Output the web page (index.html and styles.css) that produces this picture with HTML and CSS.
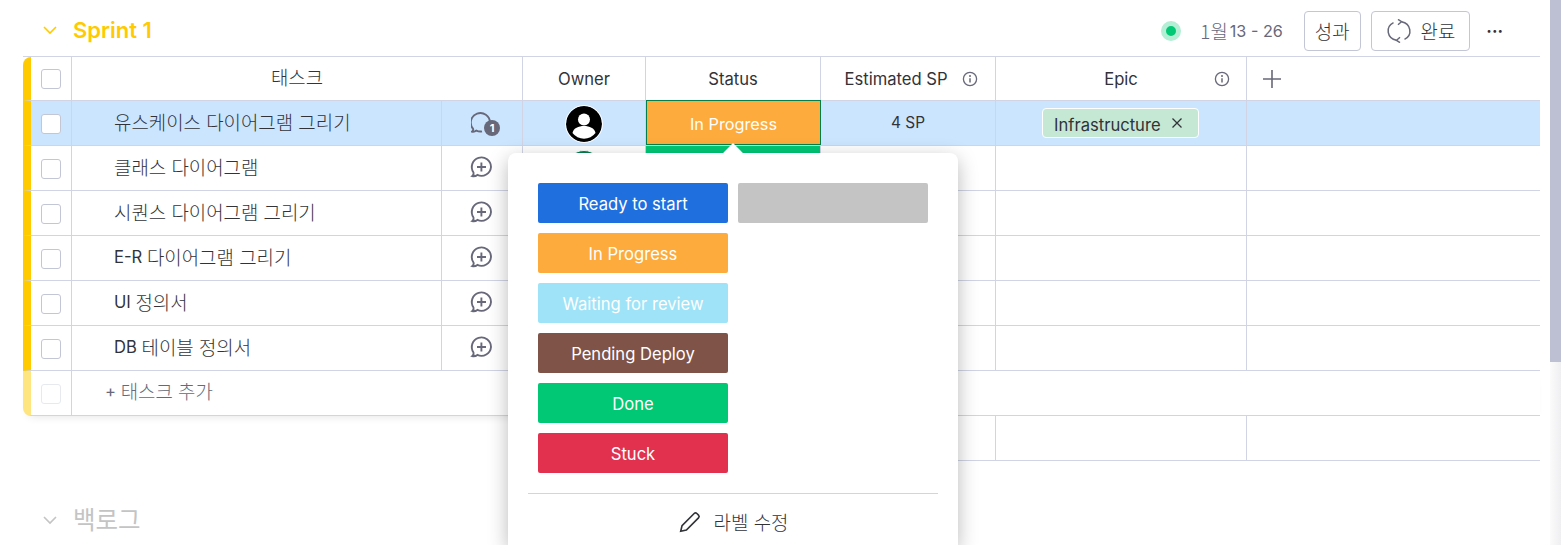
FILE: index.html
```html
<!DOCTYPE html>
<html lang="ko">
<head>
  <meta charset="UTF-8" />
  <title>Sprint board</title>
  <link rel="stylesheet" href="styles.css">
</head>
<body>
<div class="page">
  <div class="board">

    <!-- 스프린트 그룹 -->
    <div class="group-head">
      <svg class="chevron" viewBox="0 0 16 10" width="16" height="10"><path d="M2 2l6 6 6-6" fill="none" stroke="currentColor" stroke-width="1.6"/></svg>
      <span class="group-title">Sprint 1</span>
      <div class="group-tools">
        <span class="dot"></span>
        <span class="dates"><span class="ko">1월</span><span class="date-range">13 - 26</span></span>
        <button class="tool-btn"><span class="ko">성과</span></button>
        <button class="tool-btn wide">
          <svg viewBox="0 0 26 24" width="26" height="24" fill="none" stroke="#676879" stroke-width="1.5"><path d="M15.500 2.700A10.500 9.500 0 0 1 18.500 20.300M10.500 21.300A10.500 9.500 0 0 1 7.500 3.700"/><path d="M12 .4L15.500 2.700 12 5.800M14 18.200L10.500 21.300 14 23.600"/></svg>
          <span class="ko">완료</span>
        </button>
        <span class="more">···</span>
      </div>
    </div>

    <div class="table">
      <div class="row head">
        <div class="cell check"><span class="box"></span></div>
        <div class="cell task-head"><span class="ko">태스크</span></div>
        <div class="cell">Owner</div>
        <div class="cell">Status</div>
        <div class="cell sp-head">Estimated SP <svg class="info" viewBox="0 0 16 16" width="16" height="16"><circle cx="8" cy="8" r="6.600" fill="none" stroke="#676879" stroke-width="1.300"/><path d="M8 7.200v4.200" stroke="#676879" stroke-width="1.500"/><circle cx="8" cy="4.900" r="1" fill="#676879"/></svg></div>
        <div class="cell epic-head">Epic <svg class="info" viewBox="0 0 16 16" width="16" height="16"><circle cx="8" cy="8" r="6.600" fill="none" stroke="#676879" stroke-width="1.300"/><path d="M8 7.200v4.200" stroke="#676879" stroke-width="1.500"/><circle cx="8" cy="4.900" r="1" fill="#676879"/></svg></div>
        <div class="cell add-col"><svg viewBox="0 0 18 18" width="18" height="18"><path d="M9 0v18M0 9h18" stroke="#676879" stroke-width="1.600"/></svg></div>
      </div>

      <div class="row selected">
        <div class="cell check"><span class="box"></span></div>
        <div class="cell name"><span class="ko">유스케이스 다이어그램 그리기</span></div>
        <div class="cell">
          <svg class="talk talk-count" viewBox="0 0 32 28" width="32" height="28"><path d="M19 13.500a9.600 9.600 0 1 0-17 6.200c.5 1-.4 2.400-1.100 3 1.600.4 3.300-.1 4.500-1.100 1.700.8 3.900 1.200 5.600.7" fill="none" stroke="#676879" stroke-width="1.900"/><circle cx="21" cy="19" r="8" fill="#676879"/><text x="21" y="23" class="talk-num">1</text></svg>
        </div>
        <div class="cell"><span class="avatar"><svg viewBox="0 0 36 36" width="36" height="36"><circle cx="18" cy="18" r="18" fill="#000"/><circle cx="18" cy="13.500" r="6" fill="#fff"/><path d="M6.500 27c1-5 6-7 11.500-7s10.500 2 11.500 7a14.500 14.500 0 0 1-23 0z" fill="#fff"/></svg></span></div>
        <div class="cell status-cell">In Progress</div>
        <div class="cell sp">4 SP</div>
        <div class="cell epic-cell"><span class="tag">Infrastructure <svg viewBox="0 0 12 12" width="12" height="12"><path d="M1.500 1.500l9 9M10.500 1.500l-9 9" stroke="#323338" stroke-width="1.300"/></svg></span></div>
        <div class="cell add-col"></div>
      </div>

      <div class="row">
        <div class="cell check"><span class="box"></span></div>
        <div class="cell name"><span class="ko">클래스 다이어그램</span></div>
        <div class="cell"><svg class="talk" viewBox="0 0 24 24" width="24" height="24"><use href="#talk-plus"/></svg></div>
        <div class="cell"><span class="avatar green"></span></div>
        <div class="cell status-done"></div>
        <div class="cell"></div>
        <div class="cell"></div>
        <div class="cell add-col"></div>
      </div>
      <div class="row">
        <div class="cell check"><span class="box"></span></div>
        <div class="cell name"><span class="ko">시퀀스 다이어그램 그리기</span></div>
        <div class="cell"><svg class="talk" viewBox="0 0 24 24" width="24" height="24"><use href="#talk-plus"/></svg></div>
        <div class="cell"></div><div class="cell"></div><div class="cell"></div><div class="cell"></div>
        <div class="cell add-col"></div>
      </div>
      <div class="row">
        <div class="cell check"><span class="box"></span></div>
        <div class="cell name">E-R&nbsp;<span class="ko">다이어그램 그리기</span></div>
        <div class="cell"><svg class="talk" viewBox="0 0 24 24" width="24" height="24"><use href="#talk-plus"/></svg></div>
        <div class="cell"></div><div class="cell"></div><div class="cell"></div><div class="cell"></div>
        <div class="cell add-col"></div>
      </div>
      <div class="row">
        <div class="cell check"><span class="box"></span></div>
        <div class="cell name">UI&nbsp;<span class="ko">정의서</span></div>
        <div class="cell"><svg class="talk" viewBox="0 0 24 24" width="24" height="24"><use href="#talk-plus"/></svg></div>
        <div class="cell"></div><div class="cell"></div><div class="cell"></div><div class="cell"></div>
        <div class="cell add-col"></div>
      </div>
      <div class="row">
        <div class="cell check"><span class="box"></span></div>
        <div class="cell name">DB&nbsp;<span class="ko">테이블 정의서</span></div>
        <div class="cell"><svg class="talk" viewBox="0 0 24 24" width="24" height="24"><use href="#talk-plus"/></svg></div>
        <div class="cell"></div><div class="cell"></div><div class="cell"></div><div class="cell"></div>
        <div class="cell add-col"></div>
      </div>

      <div class="row add-row">
        <div class="cell check"><span class="box faded"></span></div>
        <div class="cell add-task">+&nbsp;<span class="ko">태스크 추가</span></div>
      </div>

      <div class="row summary">
        <div class="cell"></div><div class="cell"></div><div class="cell"></div><div class="cell"></div>
        <div class="cell add-col"></div>
      </div>
    </div>

    <!-- 백로그 그룹 -->
    <div class="group-head backlog">
      <svg class="chevron" viewBox="0 0 16 10" width="16" height="10"><path d="M2 2l6 6 6-6" fill="none" stroke="currentColor" stroke-width="1.600"/></svg>
      <span class="group-title ko-title">백로그</span>
    </div>

    <!-- 상태 선택 팝업 -->
    <div class="popup">
      <span class="popup-arrow"></span>
      <div class="labels">
        <span class="label blue">Ready to start</span>
        <span class="label gray"></span>
        <span class="label orange">In Progress</span>
        <span class="label sky">Waiting for review</span>
        <span class="label brown">Pending Deploy</span>
        <span class="label green">Done</span>
        <span class="label red">Stuck</span>
      </div>
      <div class="popup-foot">
        <svg viewBox="0 0 22 22" width="24" height="24" fill="none" stroke="#323338" stroke-width="1.500"><path d="M2.500 19.500l1.200-5.200L14.800 3.200a1.800 1.800 0 0 1 2.500 0l1.500 1.500a1.800 1.800 0 0 1 0 2.500L7.700 18.300z"/></svg>
        <span class="ko">라벨 수정</span>
      </div>
    </div>
  </div>
  <div class="scrollbar"><div class="scroll-thumb"></div></div>
</div>

<svg class="defs" width="0" height="0">
  <symbol id="talk-plus" viewBox="0 0 24 24">
    <path d="M22 12a9.600 9.600 0 1 0-17.500 5.500c.4 1-.4 2.800-1.300 3.600 1.800.4 3.800-.1 5.200-1.200A9.600 9.600 0 0 0 22 12z" fill="none" stroke="#676879" stroke-width="1.900"/>
    <path d="M12.400 7.500v9M8 12h9" stroke="#676879" stroke-width="1.900"/>
  </symbol>
</svg>
</body>
</html>
```

FILE: styles.css
```css
* {
  box-sizing: border-box;
}
html, body {
  margin: 0;
  height: 545px;
  overflow: hidden;
  background: white;
}
body {
  font-family: Inter, "Noto Sans CJK KR", sans-serif;
  font-size: 16.6px;
  color: #323338;
}
.ko {
  font-family: "Noto Sans CJK KR", sans-serif;
  font-size: 18.9px;
  font-weight: 300;
  line-height: 24px;
}
.page {
  display: flex;
  height: 545px;
}
.board {
  position: relative;
  flex: 1;
  padding-left: 23px;
  padding-right: 10px;
}
.scrollbar {
  width: 11px;
  background: linear-gradient(to right, #fbfbfb, #efeff1);
}
.scroll-thumb {
  height: 362px;
  background: #bcc0d2;
}
.defs {
  position: absolute;
}

/* group header */
.group-head {
  display: flex;
  align-items: center;
  height: 56px;
  padding: 4px 0 0 19px;
  color: #ffcb00;
}
.chevron {
  margin-right: 15px;
}
.group-title {
  font-size: 22px;
  font-weight: 600;
}
.group-tools {
  margin-left: auto;
  margin-top: 2px;
  display: flex;
  align-items: center;
  color: #323338;
  padding-right: 37px;
}
.dot {
  width: 20px;
  height: 20px;
  border-radius: 50%;
  background: #00c875;
  border: 5px solid #b3eed5;
  margin-right: 19px;
}
.dates {
  display: flex;
  align-items: center;
  gap: 2px;
  color: #676879;
  margin-right: 21px;
}
.date-range {
  font-size: 16.2px;
}
.tool-btn {
  display: flex;
  align-items: center;
  gap: 9px;
  height: 40px;
  padding: 0 10px;
  background: white;
  border: 1px solid #c3c6d4;
  border-radius: 4px;
  font: inherit;
  color: #323338;
  margin-right: 10px;
}
.tool-btn.wide {
  padding: 0 14px;
}
.more {
  margin-left: 6px;
  font-weight: 700;
}

/* table */
.table {
  border-top: 1px solid #d0d4e4;
  position: relative;
}
.row {
  display: grid;
  grid-template-columns: 41px 370px 81px 123px 175px 175px 251px 1fr;
  height: 45px;
  border-left: 8px solid #ffcb00;
  border-bottom: 1px solid #d0d4e4;
  background: white;
}
.row.head {
  height: 44px;
  border-top-left-radius: 8px;
  grid-template-columns: 41px 451px 123px 175px 175px 251px 1fr;
}
.cell {
  display: flex;
  align-items: center;
  justify-content: center;
  border-right: 1px solid #d0d4e4;
  min-width: 0;
}
.add-col {
  justify-content: flex-start;
  padding-left: 16px;
  border-right: none;
}
.box {
  width: 20px;
  height: 20px;
  background: white;
  border: 1px solid #c3c6d4;
  border-radius: 3px;
}
.row:not(.head) .box, .avatar {
  margin-top: 2px;
}
.box.faded {
  border-color: #e6e9ef;
}
.task-head {
  padding-bottom: 4px;
}
.sp-head {
  padding-left: 6px;
}
.info {
  margin-left: 14px;
}
.epic-head {
  position: relative;
}
.epic-head .info {
  position: absolute;
  right: 16px;
}
.row.selected {
  background: #cce5ff;
}
.name {
  justify-content: flex-start;
  padding: 0 0 2px 42px;
}
.talk {
  margin: 0 2px 2px 0;
}
.talk-count {
  margin: 0 0 0 10px;
}
.talk-num {
  font-size: 11px;
  font-weight: 700;
  fill: white;
  text-anchor: middle;
}
.avatar {
  width: 38px;
  height: 38px;
  border-radius: 50%;
  border: 1px solid white;
  overflow: hidden;
  display: flex;
}
.avatar.green {
  background: #037f4c;
}
.status-cell {
  background: #fdab3d;
  color: white;
  border: 1px solid #037f4c;
  height: 45px;
  margin-top: -1px;
  padding-top: 2px;
  font-size: 16.3px;
}
.status-done {
  background: #00c875;
}
.sp {
  font-size: 15.4px;
  padding-bottom: 2px;
}
.epic-cell {
  justify-content: flex-start;
  padding-left: 46px;
}
.tag {
  display: flex;
  align-items: center;
  gap: 10px;
  height: 30px;
  padding: 3px 15px 0 11px;
  background: #c5e8d5;
  border: 1px solid white;
  border-radius: 4px;
}
.tag svg {
  margin-top: -3px;
}
.add-row {
  grid-template-columns: 41px 1fr;
  border-left-color: #ffe580;
  border-bottom-left-radius: 8px;
  box-shadow: 0 6px 10px -6px rgba(0,0,0,0.12);
}
.add-task {
  justify-content: flex-start;
  padding: 0 0 4px 33px;
  border-right: none;
  color: #676879;
}
.row.summary {
  border-left: none;
  margin-left: 500px;
  grid-template-columns: 123px 175px 175px 251px 1fr;
}

/* backlog */
.backlog {
  color: #c4c4c4;
  margin-top: 30px;
  height: 48px;
}
.backlog .chevron {
  margin-top: 6px;
}
.ko-title {
  font-family: "Noto Sans CJK KR", sans-serif;
  font-size: 24.5px;
  font-weight: 400;
  padding-top: 2px;
}

/* status popup */
.popup {
  position: absolute;
  left: 508px;
  top: 153px;
  width: 450px;
  height: 392px;
  background: white;
  border-radius: 8px 8px 0 0;
  box-shadow: 0 6px 20px rgba(0,0,0,0.28);
  padding: 30px 20px 0;
}
.popup-arrow {
  position: absolute;
  left: 218px;
  top: -7px;
  width: 14px;
  height: 14px;
  background: white;
  transform: rotate(45deg);
}
.labels {
  display: grid;
  grid-template-columns: 190px 190px;
  grid-auto-rows: 40px;
  gap: 10px;
  padding: 0 10px 20px;
  border-bottom: 1px solid #d0d4e4;
}
.label {
  display: flex;
  align-items: center;
  justify-content: center;
  border-radius: 2px;
  color: white;
  padding-top: 2px;
}
.label.orange, .label.brown, .label.green, .label.red, .label.sky {
  grid-column: 1;
}
.blue { background: #1f6fdf; }
.gray { background: #c4c4c4; }
.orange { background: #fdab3d; }
.sky { background: #9ee3f7; }
.brown { background: #7f5347; }
.label.green { background: #00c875; }
.red { background: #e2304f; }
.popup-foot {
  display: flex;
  align-items: center;
  justify-content: center;
  gap: 12px;
  height: 58px;
  padding-bottom: 2px;
}
```
